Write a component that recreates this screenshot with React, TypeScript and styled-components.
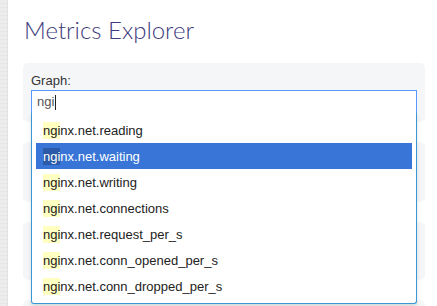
import React from 'react'
import styled, { createGlobalStyle } from 'styled-components'

const GlobalStyle = createGlobalStyle`
  html, body {
    margin: 0;
    padding: 0;
    background: #ffffff;
  }
  body {
    font-family: "Liberation Sans", Arial, sans-serif;
    overflow: hidden;
  }
`

const Shell = styled.div`
  display: flex;
  width: 437px;
  height: 306px;
  overflow: hidden;
`

const SideStrip = styled.div`
  width: 7px;
  flex: 0 0 7px;
  background: repeating-linear-gradient(180deg, #ececec 0, #ececec 3px, #e6e6e6 3px, #e6e6e6 4px);
  border-right: 1px solid #e2e2e2;
`

const Main = styled.div`
  flex: 1;
  padding: 0 12px 0 15px;
`

const Title = styled.h1`
  margin: 0;
  padding: 15px 0 0 1px;
  height: 63px;
  box-sizing: border-box;
  font-family: Lato, "Open Sans", sans-serif;
  font-weight: 300;
  font-size: 24px;
  line-height: 30px;
  color: #3d3b7c;
`

const Panels = styled.div`
  display: flex;
  flex-direction: column;
  gap: 20px;
`

const Panel = styled.div<{ $h: number }>`
  position: relative;
  height: ${(p) => p.$h}px;
  box-sizing: border-box;
  padding: 10px 8px 0 8px;
  background: #f5f6f8;
  border-radius: 5px;
`

const Label = styled.div`
  font-size: 13px;
  line-height: 16px;
  color: #333333;
  margin-bottom: 1px;
`

const Field = styled.div`
  position: relative;
`

const Input = styled.div`
  height: 23px;
  box-sizing: border-box;
  border: 1px solid #5897fb;
  border-bottom: none;
  background: #ffffff;
  padding: 0 5px;
  font-size: 13px;
  line-height: 22px;
  color: #555555;
  display: flex;
  align-items: center;
`

const Caret = styled.span`
  display: inline-block;
  width: 1px;
  height: 15px;
  background: #222222;
  margin-left: 1px;
`

const Drop = styled.div`
  position: absolute;
  top: 100%;
  left: 0;
  right: 0;
  z-index: 5;
  background: #ffffff;
  border: 1px solid #3a97d6;
  border-top: none;
  border-radius: 0 0 3px 3px;
  box-shadow: 0 3px 4px rgba(0, 0, 0, 0.12);
  padding: 4px 4px 4px 4px;
`

const Results = styled.ul`
  list-style: none;
  margin: 0;
  padding: 0;
`

const Item = styled.li<{ $active?: boolean }>`
  height: 26px;
  padding: 0 7px;
  display: flex;
  align-items: center;
  font-size: 13px;
  color: ${(p) => (p.$active ? '#ffffff' : '#222222')};
  background: ${(p) => (p.$active ? '#3875d7' : 'transparent')};
  white-space: nowrap;
`

const Match = styled.em<{ $active?: boolean }>`
  font-style: normal;
  background: ${(p) => (p.$active ? '#2a5aa8' : '#feffc0')};
  line-height: 17px;
`

const metrics = [
  'nginx.net.reading',
  'nginx.net.waiting',
  'nginx.net.writing',
  'nginx.net.connections',
  'nginx.net.request_per_s',
  'nginx.net.conn_opened_per_s',
  'nginx.net.conn_dropped_per_s',
]

const query = 'ngi'

export default function App() {
  return (
    <>
      <GlobalStyle />
      <Shell>
        <SideStrip />
        <Main>
          <Title>Metrics Explorer</Title>
          <Panels>
            <Panel $h={59}>
              <Label>Graph:</Label>
              <Field>
                <Input>
                  {query}
                  <Caret />
                </Input>
                <Drop>
                  <Results>
                    {metrics.map((m, i) => (
                      <Item key={m} $active={i === 1}>
                        <Match $active={i === 1}>{m.slice(0, query.length)}</Match>
                        {m.slice(query.length)}
                      </Item>
                    ))}
                  </Results>
                </Drop>
              </Field>
            </Panel>
            <Panel $h={60} />
            <Panel $h={58} />
            <Panel $h={58} />
          </Panels>
        </Main>
      </Shell>
    </>
  )
}
